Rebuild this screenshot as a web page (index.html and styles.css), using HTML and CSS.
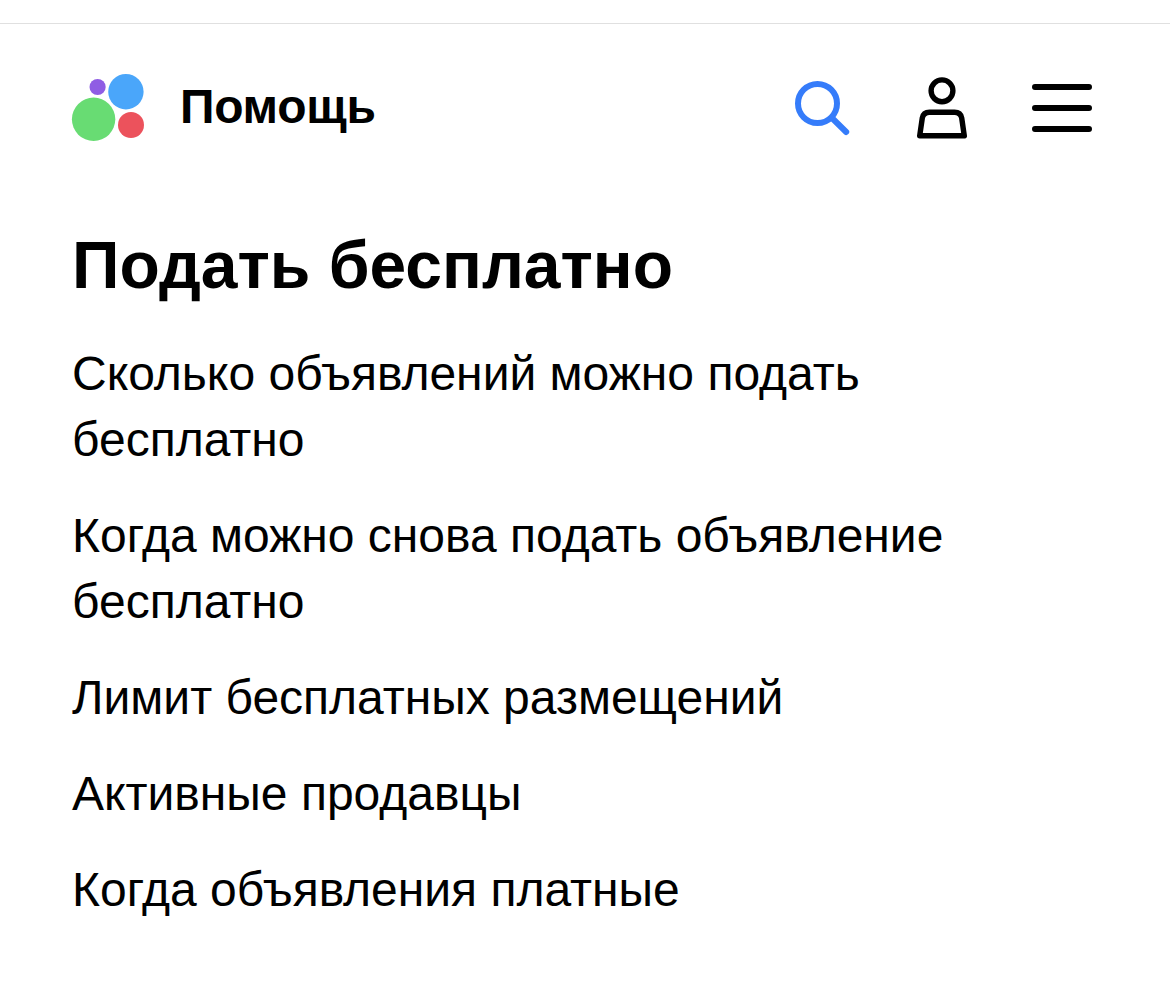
FILE: index.html
```html
<!DOCTYPE html>
<html lang="ru">
<head>
    <meta charset="UTF-8">
    <meta name="viewport" content="width=device-width, initial-scale=1.0">
    <title>Помощь</title>
    <link rel="stylesheet" href="styles.css">
</head>
<body>
    <header class="header">
        <a class="logo" href="#">
            <svg class="logo-icon" width="74" height="68" viewBox="0 0 74 68">
                <circle cx="26.600" cy="13" r="8.100" fill="#8f5de4"/>
                <circle cx="54.900" cy="17.700" r="17.700" fill="#4aa6fa"/>
                <circle cx="22.600" cy="45.300" r="21.700" fill="#68dc73"/>
                <circle cx="60" cy="51" r="13" fill="#ec525c"/>
            </svg>
            <span class="logo-text">Помощь</span>
        </a>
        <nav class="nav">
            <a class="nav-link nav-search" href="#" aria-label="Поиск">
                <svg width="60" height="66" viewBox="0 0 60 66" fill="none" stroke="#357cfa" stroke-width="6" stroke-linecap="round">
                    <circle cx="26.500" cy="28.500" r="19.500"/>
                    <path d="M41 43l14.200 14"/>
                </svg>
            </a>
            <a class="nav-link nav-user" href="#" aria-label="Профиль">
                <svg width="60" height="66" viewBox="0 0 60 66" fill="none" stroke="#000" stroke-width="5.400" stroke-linejoin="round">
                    <circle cx="30" cy="15.800" r="10.900"/>
                    <path d="M7.700 60.800L10.300 43Q11.300 37.200 17.500 37.200H42.500Q48.700 37.200 49.700 43L52.300 60.800Z"/>
                </svg>
            </a>
            <a class="nav-link" href="#" aria-label="Меню">
                <svg width="60" height="66" viewBox="0 0 60 66" fill="none" stroke="#000" stroke-width="6" stroke-linecap="round">
                    <path d="M3 12H57M3 33H57M3 54H57"/>
                </svg>
            </a>
        </nav>
    </header>
    <main class="content">
        <h1 class="title">Подать бесплатно</h1>
        <ul class="list">
            <li><a href="#">Сколько объявлений можно подать бесплатно</a></li>
            <li><a href="#">Когда можно снова подать объявление бесплатно</a></li>
            <li><a href="#">Лимит бесплатных размещений</a></li>
            <li><a href="#">Активные продавцы</a></li>
            <li><a href="#">Когда объявления платные</a></li>
        </ul>
    </main>
</body>
</html>
```
FILE: styles.css
```css
*{
    margin: 0;
    padding: 0;
    box-sizing: border-box;
    list-style: none;
}
body{
    padding-top: 23px;
    background-color: #fff;
    color: #000;
    font-family: "Liberation Sans", Arial, sans-serif;
}
a{
    color: inherit;
    text-decoration: none;
}
.header{
    display: flex;
    justify-content: space-between;
    align-items: center;
    height: 169px;
    padding: 0 78px 0 71px;
    border-top: 1px solid #e0e0e0;
}
.logo{
    display: flex;
    align-items: center;
    gap: 35px;
}
.logo-icon,
.nav svg{
    display: block;
}
.logo-text{
    padding-bottom: 2px;
    font-size: 48px;
    line-height: 60px;
    font-weight: bold;
    letter-spacing: -0.3px;
}
.nav{
    display: flex;
}
.nav-search{
    margin-right: 61px;
}
.nav-user{
    margin-right: 60px;
}
.content{
    padding: 34px 150px 0 72px;
}
.title{
    font-size: 66px;
    line-height: 78px;
    font-weight: bold;
}
.list{
    display: flex;
    flex-direction: column;
    gap: 30px;
    padding-top: 37px;
    font-size: 48px;
    line-height: 66px;
}
```
